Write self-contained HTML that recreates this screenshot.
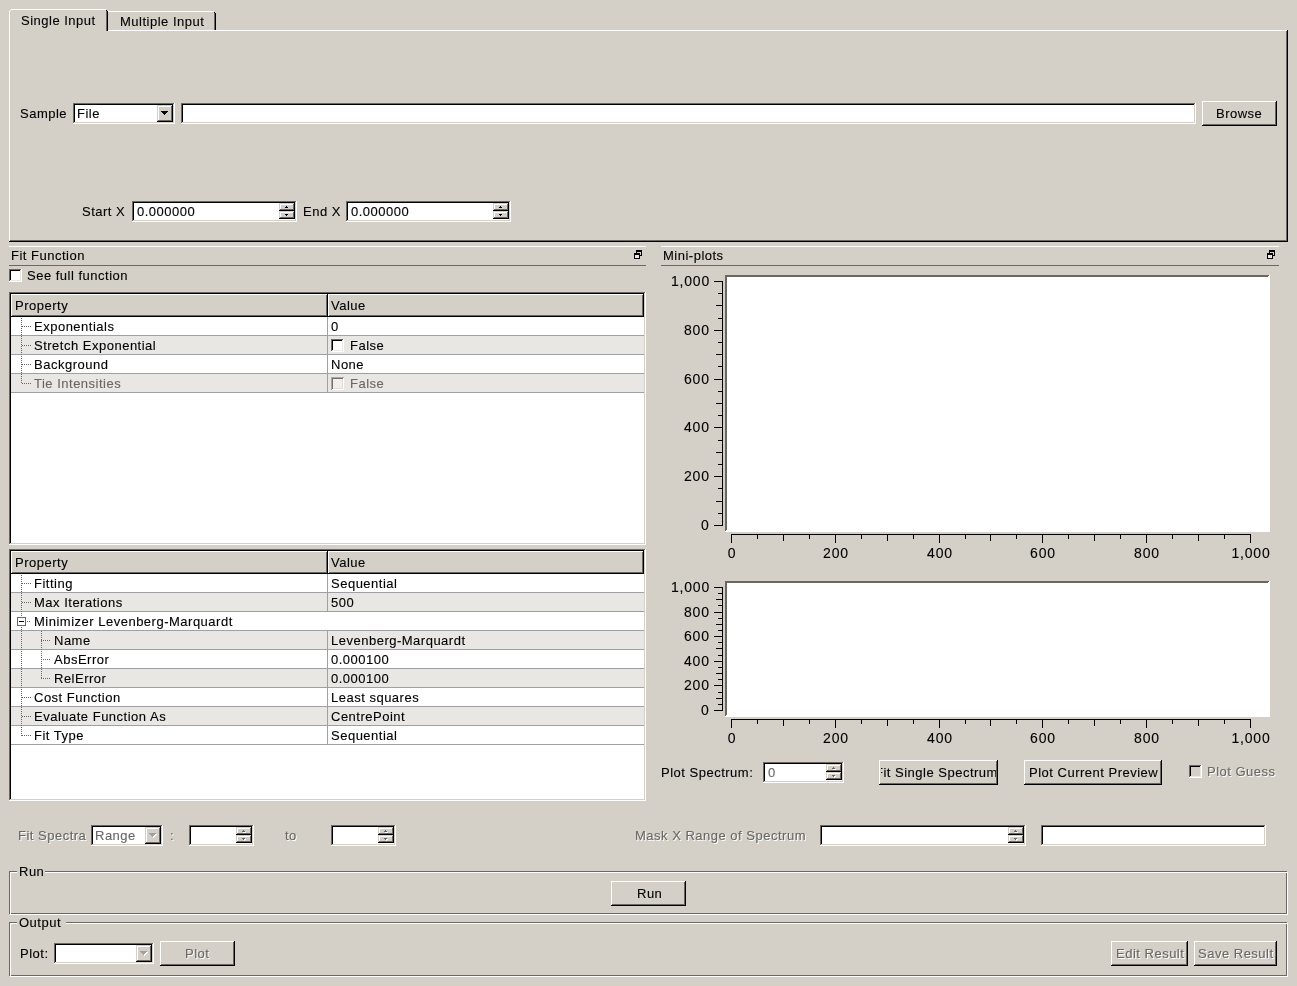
<!DOCTYPE html><html><head><meta charset="utf-8"><style>
html,body{margin:0;padding:0;width:1297px;height:986px;overflow:hidden;background:#d4d0c8;}
.a{position:absolute;}
.t{position:absolute;font-family:"Liberation Sans",sans-serif;font-size:13px;line-height:15px;white-space:nowrap;will-change:transform;-webkit-text-stroke:0.12px currentColor;}
</style></head><body>
<div class="a" style="left:9px;top:30px;width:1279px;height:212px;box-shadow:inset -1px -1px #000,inset 1px 1px #fff,inset -2px -2px #6a6864"></div>
<div class="a" style="left:108px;top:11px;width:108px;height:19px;background:#d4d0c8"></div>
<div class="a" style="left:108px;top:11px;width:106px;height:1px;background:#fff"></div>
<div class="a" style="left:214px;top:12px;width:1px;height:1px;background:#000"></div>
<div class="a" style="left:215px;top:13px;width:1px;height:17px;background:#000"></div>
<div class="a" style="left:214px;top:13px;width:1px;height:17px;background:#6a6864"></div>
<div class="t" style="left:120px;top:14px;color:#000;letter-spacing:0.5px;font-size:13px;">Multiple Input</div>
<div class="a" style="left:9px;top:9px;width:99px;height:22px;background:#d4d0c8"></div>
<div class="a" style="left:11px;top:9px;width:95px;height:1px;background:#fff"></div>
<div class="a" style="left:10px;top:10px;width:1px;height:1px;background:#fff"></div>
<div class="a" style="left:9px;top:11px;width:1px;height:20px;background:#fff"></div>
<div class="a" style="left:106px;top:10px;width:1px;height:1px;background:#000"></div>
<div class="a" style="left:107px;top:11px;width:1px;height:20px;background:#000"></div>
<div class="a" style="left:106px;top:11px;width:1px;height:20px;background:#6a6864"></div>
<div class="t" style="left:21px;top:13px;color:#000;letter-spacing:0.5px;font-size:13px;">Single Input</div>
<div class="t" style="left:20px;top:106px;color:#000;letter-spacing:0.5px;font-size:13px;">Sample</div>
<div class="a" style="left:73px;top:103px;width:102px;height:21px;background:#fff;box-shadow:inset -1px -1px #fff,inset 1px 1px #6a6864,inset -2px -2px #d4d0c8,inset 2px 2px #000"></div>
<div class="a" style="left:157px;top:105px;width:16px;height:17px;background:#d4d0c8;box-shadow:inset -1px -1px #000,inset 1px 1px #d4d0c8,inset -2px -2px #6a6864,inset 2px 2px #fff"></div>
<div class="a" style="left:161px;top:111px;width:7px;height:1px;background:#000"></div>
<div class="a" style="left:162px;top:112px;width:5px;height:1px;background:#000"></div>
<div class="a" style="left:163px;top:113px;width:3px;height:1px;background:#000"></div>
<div class="a" style="left:164px;top:114px;width:1px;height:1px;background:#000"></div>
<div class="t" style="left:77px;top:106px;color:#000;letter-spacing:0.5px;font-size:13px;">File</div>
<div class="a" style="left:181px;top:103px;width:1015px;height:21px;background:#fff;box-shadow:inset -1px -1px #fff,inset 1px 1px #6a6864,inset -2px -2px #d4d0c8,inset 2px 2px #000"></div>
<div class="a" style="left:1202px;top:101px;width:75px;height:25px;background:#d4d0c8;box-shadow:inset -1px -1px #000,inset 1px 1px #fff,inset -2px -2px #6a6864,inset 2px 2px #d4d0c8"></div>
<div class="t" style="left:1216px;top:106px;color:#000;letter-spacing:0.5px;font-size:13px;">Browse</div>
<div class="t" style="left:82px;top:204px;color:#000;letter-spacing:0.5px;font-size:13px;">Start X</div>
<div class="a" style="left:132px;top:201px;width:165px;height:21px;background:#fff;box-shadow:inset -1px -1px #fff,inset 1px 1px #6a6864,inset -2px -2px #d4d0c8,inset 2px 2px #000"></div>
<div class="a" style="left:279px;top:203px;width:16px;height:8px;background:#d4d0c8;box-shadow:inset -1px -1px #000,inset 1px 1px #d4d0c8,inset -2px -2px #6a6864,inset 2px 2px #fff"></div>
<div class="a" style="left:279px;top:211px;width:16px;height:8px;background:#d4d0c8;box-shadow:inset -1px -1px #000,inset 1px 1px #d4d0c8,inset -2px -2px #6a6864,inset 2px 2px #fff"></div>
<div class="a" style="left:286px;top:206px;width:1px;height:1px;background:#000"></div>
<div class="a" style="left:285px;top:207px;width:3px;height:1px;background:#000"></div>
<div class="a" style="left:285px;top:214px;width:3px;height:1px;background:#000"></div>
<div class="a" style="left:286px;top:215px;width:1px;height:1px;background:#000"></div>
<div class="t" style="left:137px;top:204px;color:#000;letter-spacing:0.5px;font-size:13px;">0.000000</div>
<div class="t" style="left:303px;top:204px;color:#000;letter-spacing:0.5px;font-size:13px;">End X</div>
<div class="a" style="left:346px;top:201px;width:165px;height:21px;background:#fff;box-shadow:inset -1px -1px #fff,inset 1px 1px #6a6864,inset -2px -2px #d4d0c8,inset 2px 2px #000"></div>
<div class="a" style="left:493px;top:203px;width:16px;height:8px;background:#d4d0c8;box-shadow:inset -1px -1px #000,inset 1px 1px #d4d0c8,inset -2px -2px #6a6864,inset 2px 2px #fff"></div>
<div class="a" style="left:493px;top:211px;width:16px;height:8px;background:#d4d0c8;box-shadow:inset -1px -1px #000,inset 1px 1px #d4d0c8,inset -2px -2px #6a6864,inset 2px 2px #fff"></div>
<div class="a" style="left:500px;top:206px;width:1px;height:1px;background:#000"></div>
<div class="a" style="left:499px;top:207px;width:3px;height:1px;background:#000"></div>
<div class="a" style="left:499px;top:214px;width:3px;height:1px;background:#000"></div>
<div class="a" style="left:500px;top:215px;width:1px;height:1px;background:#000"></div>
<div class="t" style="left:351px;top:204px;color:#000;letter-spacing:0.5px;font-size:13px;">0.000000</div>
<div class="a" style="left:9px;top:246px;width:637px;height:1px;background:#fff"></div>
<div class="a" style="left:9px;top:265px;width:637px;height:1px;background:#6a6864"></div>
<div class="t" style="left:11px;top:248px;color:#000;letter-spacing:0.5px;font-size:13px;">Fit Function</div>
<svg class="a" style="left:634px;top:250px" width="9" height="9" shape-rendering="crispEdges"><rect x="2.5" y="0.5" width="5" height="5" fill="#d4d0c8" stroke="#000"/><rect x="2" y="0" width="6" height="2" fill="#000"/><rect x="0.5" y="3.5" width="5" height="5" fill="#e9e7e3" stroke="#000"/><rect x="0" y="3" width="6" height="2" fill="#000"/></svg>
<div class="a" style="left:9px;top:269px;width:13px;height:13px;background:#fff;box-shadow:inset -1px -1px #fff,inset 1px 1px #6a6864,inset -2px -2px #e9e7e3,inset 2px 2px #000"></div>
<div class="t" style="left:27px;top:268px;color:#000;letter-spacing:0.5px;font-size:13px;">See full function</div>
<div class="a" style="left:9px;top:292px;width:637px;height:253px;background:#fff;box-shadow:inset -1px -1px #fff,inset 1px 1px #6a6864,inset -2px -2px #d4d0c8,inset 2px 2px #000"></div>
<div class="a" style="left:11px;top:294px;width:317px;height:23px;background:#d4d0c8;box-shadow:inset -1px -1px #000,inset 1px 1px #fff,inset -2px -2px #6a6864,inset 2px 2px #d4d0c8"></div>
<div class="a" style="left:328px;top:294px;width:316px;height:23px;background:#d4d0c8;box-shadow:inset -1px -1px #000,inset 1px 1px #fff,inset -2px -2px #6a6864,inset 2px 2px #d4d0c8"></div>
<div class="t" style="left:15px;top:298px;color:#000;letter-spacing:0.5px;font-size:13px;">Property</div>
<div class="t" style="left:331px;top:298px;color:#000;letter-spacing:0.5px;font-size:13px;">Value</div>
<div class="a" style="left:11px;top:317px;width:633px;height:19px;background:#fff"></div>
<div class="a" style="left:11px;top:335px;width:633px;height:1px;background:#a0a0a4"></div>
<div class="a" style="left:327px;top:317px;width:1px;height:19px;background:#a0a0a4"></div>
<div class="t" style="left:34px;top:319px;color:#000;letter-spacing:0.5px;font-size:13px;">Exponentials</div>
<div class="t" style="left:331px;top:319px;color:#000;letter-spacing:0.5px;font-size:13px;">0</div>
<div class="a" style="left:11px;top:336px;width:633px;height:19px;background:#e9e7e3"></div>
<div class="a" style="left:11px;top:354px;width:633px;height:1px;background:#a0a0a4"></div>
<div class="a" style="left:327px;top:336px;width:1px;height:19px;background:#a0a0a4"></div>
<div class="t" style="left:34px;top:338px;color:#000;letter-spacing:0.5px;font-size:13px;">Stretch Exponential</div>
<div class="a" style="left:331px;top:339px;width:13px;height:13px;background:#fff;box-shadow:inset -1px -1px #fff,inset 1px 1px #6a6864,inset -2px -2px #e9e7e3,inset 2px 2px #000"></div>
<div class="t" style="left:350px;top:338px;color:#000;letter-spacing:0.5px;font-size:13px;">False</div>
<div class="a" style="left:11px;top:355px;width:633px;height:19px;background:#fff"></div>
<div class="a" style="left:11px;top:373px;width:633px;height:1px;background:#a0a0a4"></div>
<div class="a" style="left:327px;top:355px;width:1px;height:19px;background:#a0a0a4"></div>
<div class="t" style="left:34px;top:357px;color:#000;letter-spacing:0.5px;font-size:13px;">Background</div>
<div class="t" style="left:331px;top:357px;color:#000;letter-spacing:0.5px;font-size:13px;">None</div>
<div class="a" style="left:11px;top:374px;width:633px;height:19px;background:#e9e7e3"></div>
<div class="a" style="left:11px;top:392px;width:633px;height:1px;background:#a0a0a4"></div>
<div class="a" style="left:327px;top:374px;width:1px;height:19px;background:#a0a0a4"></div>
<div class="t" style="left:34px;top:376px;color:#6a6864;letter-spacing:0.5px;font-size:13px;">Tie Intensities</div>
<div class="a" style="left:331px;top:377px;width:13px;height:13px;background:#f2efeb;box-shadow:inset 1px 1px #a8a8a8,inset -1px -1px #fff,inset 2px 2px #707070,inset -2px -2px #e0ddd8"></div>
<div class="t" style="left:350px;top:376px;color:#6a6864;letter-spacing:0.5px;font-size:13px;">False</div>
<div class="a" style="left:21px;top:318px;width:1px;height:66px;background:repeating-linear-gradient(to bottom,#6a6864 0 1px,transparent 1px 2px)"></div>
<div class="a" style="left:22px;top:326px;width:9px;height:1px;background:repeating-linear-gradient(to right,#6a6864 0 1px,transparent 1px 2px)"></div>
<div class="a" style="left:22px;top:345px;width:9px;height:1px;background:repeating-linear-gradient(to right,#6a6864 0 1px,transparent 1px 2px)"></div>
<div class="a" style="left:22px;top:364px;width:9px;height:1px;background:repeating-linear-gradient(to right,#6a6864 0 1px,transparent 1px 2px)"></div>
<div class="a" style="left:22px;top:383px;width:9px;height:1px;background:repeating-linear-gradient(to right,#6a6864 0 1px,transparent 1px 2px)"></div>
<div class="a" style="left:9px;top:549px;width:637px;height:252px;background:#fff;box-shadow:inset -1px -1px #fff,inset 1px 1px #6a6864,inset -2px -2px #d4d0c8,inset 2px 2px #000"></div>
<div class="a" style="left:11px;top:551px;width:317px;height:23px;background:#d4d0c8;box-shadow:inset -1px -1px #000,inset 1px 1px #fff,inset -2px -2px #6a6864,inset 2px 2px #d4d0c8"></div>
<div class="a" style="left:328px;top:551px;width:316px;height:23px;background:#d4d0c8;box-shadow:inset -1px -1px #000,inset 1px 1px #fff,inset -2px -2px #6a6864,inset 2px 2px #d4d0c8"></div>
<div class="t" style="left:15px;top:555px;color:#000;letter-spacing:0.5px;font-size:13px;">Property</div>
<div class="t" style="left:331px;top:555px;color:#000;letter-spacing:0.5px;font-size:13px;">Value</div>
<div class="a" style="left:11px;top:574px;width:633px;height:19px;background:#fff"></div>
<div class="a" style="left:11px;top:592px;width:633px;height:1px;background:#a0a0a4"></div>
<div class="a" style="left:327px;top:574px;width:1px;height:19px;background:#a0a0a4"></div>
<div class="t" style="left:34px;top:576px;color:#000;letter-spacing:0.5px;font-size:13px;">Fitting</div>
<div class="t" style="left:331px;top:576px;color:#000;letter-spacing:0.5px;font-size:13px;">Sequential</div>
<div class="a" style="left:11px;top:593px;width:633px;height:19px;background:#e9e7e3"></div>
<div class="a" style="left:11px;top:611px;width:633px;height:1px;background:#a0a0a4"></div>
<div class="a" style="left:327px;top:593px;width:1px;height:19px;background:#a0a0a4"></div>
<div class="t" style="left:34px;top:595px;color:#000;letter-spacing:0.5px;font-size:13px;">Max Iterations</div>
<div class="t" style="left:331px;top:595px;color:#000;letter-spacing:0.5px;font-size:13px;">500</div>
<div class="a" style="left:11px;top:612px;width:633px;height:19px;background:#fff"></div>
<div class="a" style="left:11px;top:630px;width:633px;height:1px;background:#a0a0a4"></div>
<div class="t" style="left:34px;top:614px;color:#000;letter-spacing:0.5px;font-size:13px;">Minimizer Levenberg-Marquardt</div>
<div class="a" style="left:11px;top:631px;width:633px;height:19px;background:#e9e7e3"></div>
<div class="a" style="left:11px;top:649px;width:633px;height:1px;background:#a0a0a4"></div>
<div class="a" style="left:327px;top:631px;width:1px;height:19px;background:#a0a0a4"></div>
<div class="t" style="left:54px;top:633px;color:#000;letter-spacing:0.5px;font-size:13px;">Name</div>
<div class="t" style="left:331px;top:633px;color:#000;letter-spacing:0.5px;font-size:13px;">Levenberg-Marquardt</div>
<div class="a" style="left:11px;top:650px;width:633px;height:19px;background:#fff"></div>
<div class="a" style="left:11px;top:668px;width:633px;height:1px;background:#a0a0a4"></div>
<div class="a" style="left:327px;top:650px;width:1px;height:19px;background:#a0a0a4"></div>
<div class="t" style="left:54px;top:652px;color:#000;letter-spacing:0.5px;font-size:13px;">AbsError</div>
<div class="t" style="left:331px;top:652px;color:#000;letter-spacing:0.5px;font-size:13px;">0.000100</div>
<div class="a" style="left:11px;top:669px;width:633px;height:19px;background:#e9e7e3"></div>
<div class="a" style="left:11px;top:687px;width:633px;height:1px;background:#a0a0a4"></div>
<div class="a" style="left:327px;top:669px;width:1px;height:19px;background:#a0a0a4"></div>
<div class="t" style="left:54px;top:671px;color:#000;letter-spacing:0.5px;font-size:13px;">RelError</div>
<div class="t" style="left:331px;top:671px;color:#000;letter-spacing:0.5px;font-size:13px;">0.000100</div>
<div class="a" style="left:11px;top:688px;width:633px;height:19px;background:#fff"></div>
<div class="a" style="left:11px;top:706px;width:633px;height:1px;background:#a0a0a4"></div>
<div class="a" style="left:327px;top:688px;width:1px;height:19px;background:#a0a0a4"></div>
<div class="t" style="left:34px;top:690px;color:#000;letter-spacing:0.5px;font-size:13px;">Cost Function</div>
<div class="t" style="left:331px;top:690px;color:#000;letter-spacing:0.5px;font-size:13px;">Least squares</div>
<div class="a" style="left:11px;top:707px;width:633px;height:19px;background:#e9e7e3"></div>
<div class="a" style="left:11px;top:725px;width:633px;height:1px;background:#a0a0a4"></div>
<div class="a" style="left:327px;top:707px;width:1px;height:19px;background:#a0a0a4"></div>
<div class="t" style="left:34px;top:709px;color:#000;letter-spacing:0.5px;font-size:13px;">Evaluate Function As</div>
<div class="t" style="left:331px;top:709px;color:#000;letter-spacing:0.5px;font-size:13px;">CentrePoint</div>
<div class="a" style="left:11px;top:726px;width:633px;height:19px;background:#fff"></div>
<div class="a" style="left:11px;top:744px;width:633px;height:1px;background:#a0a0a4"></div>
<div class="a" style="left:327px;top:726px;width:1px;height:19px;background:#a0a0a4"></div>
<div class="t" style="left:34px;top:728px;color:#000;letter-spacing:0.5px;font-size:13px;">Fit Type</div>
<div class="t" style="left:331px;top:728px;color:#000;letter-spacing:0.5px;font-size:13px;">Sequential</div>
<div class="a" style="left:21px;top:575px;width:1px;height:161px;background:repeating-linear-gradient(to bottom,#6a6864 0 1px,transparent 1px 2px)"></div>
<div class="a" style="left:22px;top:583px;width:9px;height:1px;background:repeating-linear-gradient(to right,#6a6864 0 1px,transparent 1px 2px)"></div>
<div class="a" style="left:22px;top:602px;width:9px;height:1px;background:repeating-linear-gradient(to right,#6a6864 0 1px,transparent 1px 2px)"></div>
<div class="a" style="left:17px;top:617px;width:9px;height:9px;background:#fff;border:1px solid #6a6864;box-sizing:border-box"></div>
<div class="a" style="left:19px;top:621px;width:5px;height:1px;background:#000"></div>
<div class="a" style="left:27px;top:621px;width:4px;height:1px;background:repeating-linear-gradient(to right,#6a6864 0 1px,transparent 1px 2px)"></div>
<div class="a" style="left:41px;top:640px;width:10px;height:1px;background:repeating-linear-gradient(to right,#6a6864 0 1px,transparent 1px 2px)"></div>
<div class="a" style="left:41px;top:659px;width:10px;height:1px;background:repeating-linear-gradient(to right,#6a6864 0 1px,transparent 1px 2px)"></div>
<div class="a" style="left:41px;top:678px;width:10px;height:1px;background:repeating-linear-gradient(to right,#6a6864 0 1px,transparent 1px 2px)"></div>
<div class="a" style="left:22px;top:697px;width:9px;height:1px;background:repeating-linear-gradient(to right,#6a6864 0 1px,transparent 1px 2px)"></div>
<div class="a" style="left:22px;top:716px;width:9px;height:1px;background:repeating-linear-gradient(to right,#6a6864 0 1px,transparent 1px 2px)"></div>
<div class="a" style="left:22px;top:735px;width:9px;height:1px;background:repeating-linear-gradient(to right,#6a6864 0 1px,transparent 1px 2px)"></div>
<div class="a" style="left:41px;top:631px;width:1px;height:48px;background:repeating-linear-gradient(to bottom,#6a6864 0 1px,transparent 1px 2px)"></div>
<div class="a" style="left:661px;top:246px;width:618px;height:1px;background:#fff"></div>
<div class="a" style="left:661px;top:265px;width:618px;height:1px;background:#6a6864"></div>
<div class="t" style="left:663px;top:248px;color:#000;letter-spacing:0.5px;font-size:13px;">Mini-plots</div>
<svg class="a" style="left:1267px;top:250px" width="9" height="9" shape-rendering="crispEdges"><rect x="2.5" y="0.5" width="5" height="5" fill="#d4d0c8" stroke="#000"/><rect x="2" y="0" width="6" height="2" fill="#000"/><rect x="0.5" y="3.5" width="5" height="5" fill="#e9e7e3" stroke="#000"/><rect x="0" y="3" width="6" height="2" fill="#000"/></svg>
<div class="a" style="left:725px;top:275px;width:545px;height:257px;background:#fff"></div>
<div class="a" style="left:725px;top:275px;width:544px;height:1px;background:#6a6864"></div>
<div class="a" style="left:726px;top:276px;width:542px;height:1px;background:#6a6864"></div>
<div class="a" style="left:725px;top:275px;width:1px;height:256px;background:#6a6864"></div>
<div class="a" style="left:726px;top:276px;width:1px;height:254px;background:#6a6864"></div>
<div class="a" style="left:722px;top:281px;width:1px;height:245px;background:#000"></div>
<div class="a" style="left:714px;top:281px;width:8px;height:1px;background:#000"></div>
<div class="t" style="right:587px;top:273px;letter-spacing:0.8px;font-size:14px;line-height:16px">1,000</div>
<div class="a" style="left:718px;top:293px;width:4px;height:1px;background:#000"></div>
<div class="a" style="left:716px;top:305px;width:6px;height:1px;background:#000"></div>
<div class="a" style="left:718px;top:318px;width:4px;height:1px;background:#000"></div>
<div class="a" style="left:714px;top:330px;width:8px;height:1px;background:#000"></div>
<div class="t" style="right:587px;top:322px;letter-spacing:0.8px;font-size:14px;line-height:16px">800</div>
<div class="a" style="left:718px;top:342px;width:4px;height:1px;background:#000"></div>
<div class="a" style="left:716px;top:354px;width:6px;height:1px;background:#000"></div>
<div class="a" style="left:718px;top:366px;width:4px;height:1px;background:#000"></div>
<div class="a" style="left:714px;top:379px;width:8px;height:1px;background:#000"></div>
<div class="t" style="right:587px;top:371px;letter-spacing:0.8px;font-size:14px;line-height:16px">600</div>
<div class="a" style="left:718px;top:391px;width:4px;height:1px;background:#000"></div>
<div class="a" style="left:716px;top:403px;width:6px;height:1px;background:#000"></div>
<div class="a" style="left:718px;top:415px;width:4px;height:1px;background:#000"></div>
<div class="a" style="left:714px;top:427px;width:8px;height:1px;background:#000"></div>
<div class="t" style="right:587px;top:419px;letter-spacing:0.8px;font-size:14px;line-height:16px">400</div>
<div class="a" style="left:718px;top:440px;width:4px;height:1px;background:#000"></div>
<div class="a" style="left:716px;top:452px;width:6px;height:1px;background:#000"></div>
<div class="a" style="left:718px;top:464px;width:4px;height:1px;background:#000"></div>
<div class="a" style="left:714px;top:476px;width:8px;height:1px;background:#000"></div>
<div class="t" style="right:587px;top:468px;letter-spacing:0.8px;font-size:14px;line-height:16px">200</div>
<div class="a" style="left:718px;top:488px;width:4px;height:1px;background:#000"></div>
<div class="a" style="left:716px;top:501px;width:6px;height:1px;background:#000"></div>
<div class="a" style="left:718px;top:513px;width:4px;height:1px;background:#000"></div>
<div class="a" style="left:714px;top:525px;width:8px;height:1px;background:#000"></div>
<div class="t" style="right:587px;top:517px;letter-spacing:0.8px;font-size:14px;line-height:16px">0</div>
<div class="a" style="left:731px;top:534px;width:520px;height:1px;background:#000"></div>
<div class="a" style="left:731px;top:535px;width:1px;height:8px;background:#000"></div>
<div class="t" style="left:682px;width:100px;text-align:center;top:545px;letter-spacing:0.8px;font-size:14px;line-height:16px">0</div>
<div class="a" style="left:757px;top:535px;width:1px;height:4px;background:#000"></div>
<div class="a" style="left:783px;top:535px;width:1px;height:6px;background:#000"></div>
<div class="a" style="left:809px;top:535px;width:1px;height:4px;background:#000"></div>
<div class="a" style="left:835px;top:535px;width:1px;height:8px;background:#000"></div>
<div class="t" style="left:786px;width:100px;text-align:center;top:545px;letter-spacing:0.8px;font-size:14px;line-height:16px">200</div>
<div class="a" style="left:861px;top:535px;width:1px;height:4px;background:#000"></div>
<div class="a" style="left:887px;top:535px;width:1px;height:6px;background:#000"></div>
<div class="a" style="left:913px;top:535px;width:1px;height:4px;background:#000"></div>
<div class="a" style="left:939px;top:535px;width:1px;height:8px;background:#000"></div>
<div class="t" style="left:890px;width:100px;text-align:center;top:545px;letter-spacing:0.8px;font-size:14px;line-height:16px">400</div>
<div class="a" style="left:965px;top:535px;width:1px;height:4px;background:#000"></div>
<div class="a" style="left:990px;top:535px;width:1px;height:6px;background:#000"></div>
<div class="a" style="left:1016px;top:535px;width:1px;height:4px;background:#000"></div>
<div class="a" style="left:1042px;top:535px;width:1px;height:8px;background:#000"></div>
<div class="t" style="left:993px;width:100px;text-align:center;top:545px;letter-spacing:0.8px;font-size:14px;line-height:16px">600</div>
<div class="a" style="left:1068px;top:535px;width:1px;height:4px;background:#000"></div>
<div class="a" style="left:1094px;top:535px;width:1px;height:6px;background:#000"></div>
<div class="a" style="left:1120px;top:535px;width:1px;height:4px;background:#000"></div>
<div class="a" style="left:1146px;top:535px;width:1px;height:8px;background:#000"></div>
<div class="t" style="left:1097px;width:100px;text-align:center;top:545px;letter-spacing:0.8px;font-size:14px;line-height:16px">800</div>
<div class="a" style="left:1172px;top:535px;width:1px;height:4px;background:#000"></div>
<div class="a" style="left:1198px;top:535px;width:1px;height:6px;background:#000"></div>
<div class="a" style="left:1224px;top:535px;width:1px;height:4px;background:#000"></div>
<div class="a" style="left:1250px;top:535px;width:1px;height:8px;background:#000"></div>
<div class="t" style="left:1201px;width:100px;text-align:center;top:545px;letter-spacing:0.8px;font-size:14px;line-height:16px">1,000</div>
<div class="a" style="left:725px;top:581px;width:545px;height:136px;background:#fff"></div>
<div class="a" style="left:725px;top:581px;width:544px;height:1px;background:#6a6864"></div>
<div class="a" style="left:726px;top:582px;width:542px;height:1px;background:#6a6864"></div>
<div class="a" style="left:725px;top:581px;width:1px;height:135px;background:#6a6864"></div>
<div class="a" style="left:726px;top:582px;width:1px;height:133px;background:#6a6864"></div>
<div class="a" style="left:722px;top:587px;width:1px;height:124px;background:#000"></div>
<div class="a" style="left:714px;top:587px;width:8px;height:1px;background:#000"></div>
<div class="t" style="right:587px;top:579px;letter-spacing:0.8px;font-size:14px;line-height:16px">1,000</div>
<div class="a" style="left:718px;top:593px;width:4px;height:1px;background:#000"></div>
<div class="a" style="left:716px;top:599px;width:6px;height:1px;background:#000"></div>
<div class="a" style="left:718px;top:605px;width:4px;height:1px;background:#000"></div>
<div class="a" style="left:714px;top:612px;width:8px;height:1px;background:#000"></div>
<div class="t" style="right:587px;top:604px;letter-spacing:0.8px;font-size:14px;line-height:16px">800</div>
<div class="a" style="left:718px;top:618px;width:4px;height:1px;background:#000"></div>
<div class="a" style="left:716px;top:624px;width:6px;height:1px;background:#000"></div>
<div class="a" style="left:718px;top:630px;width:4px;height:1px;background:#000"></div>
<div class="a" style="left:714px;top:636px;width:8px;height:1px;background:#000"></div>
<div class="t" style="right:587px;top:628px;letter-spacing:0.8px;font-size:14px;line-height:16px">600</div>
<div class="a" style="left:718px;top:642px;width:4px;height:1px;background:#000"></div>
<div class="a" style="left:716px;top:648px;width:6px;height:1px;background:#000"></div>
<div class="a" style="left:718px;top:655px;width:4px;height:1px;background:#000"></div>
<div class="a" style="left:714px;top:661px;width:8px;height:1px;background:#000"></div>
<div class="t" style="right:587px;top:653px;letter-spacing:0.8px;font-size:14px;line-height:16px">400</div>
<div class="a" style="left:718px;top:667px;width:4px;height:1px;background:#000"></div>
<div class="a" style="left:716px;top:673px;width:6px;height:1px;background:#000"></div>
<div class="a" style="left:718px;top:679px;width:4px;height:1px;background:#000"></div>
<div class="a" style="left:714px;top:685px;width:8px;height:1px;background:#000"></div>
<div class="t" style="right:587px;top:677px;letter-spacing:0.8px;font-size:14px;line-height:16px">200</div>
<div class="a" style="left:718px;top:692px;width:4px;height:1px;background:#000"></div>
<div class="a" style="left:716px;top:698px;width:6px;height:1px;background:#000"></div>
<div class="a" style="left:718px;top:704px;width:4px;height:1px;background:#000"></div>
<div class="a" style="left:714px;top:710px;width:8px;height:1px;background:#000"></div>
<div class="t" style="right:587px;top:702px;letter-spacing:0.8px;font-size:14px;line-height:16px">0</div>
<div class="a" style="left:731px;top:719px;width:520px;height:1px;background:#000"></div>
<div class="a" style="left:731px;top:720px;width:1px;height:8px;background:#000"></div>
<div class="t" style="left:682px;width:100px;text-align:center;top:730px;letter-spacing:0.8px;font-size:14px;line-height:16px">0</div>
<div class="a" style="left:757px;top:720px;width:1px;height:4px;background:#000"></div>
<div class="a" style="left:783px;top:720px;width:1px;height:6px;background:#000"></div>
<div class="a" style="left:809px;top:720px;width:1px;height:4px;background:#000"></div>
<div class="a" style="left:835px;top:720px;width:1px;height:8px;background:#000"></div>
<div class="t" style="left:786px;width:100px;text-align:center;top:730px;letter-spacing:0.8px;font-size:14px;line-height:16px">200</div>
<div class="a" style="left:861px;top:720px;width:1px;height:4px;background:#000"></div>
<div class="a" style="left:887px;top:720px;width:1px;height:6px;background:#000"></div>
<div class="a" style="left:913px;top:720px;width:1px;height:4px;background:#000"></div>
<div class="a" style="left:939px;top:720px;width:1px;height:8px;background:#000"></div>
<div class="t" style="left:890px;width:100px;text-align:center;top:730px;letter-spacing:0.8px;font-size:14px;line-height:16px">400</div>
<div class="a" style="left:965px;top:720px;width:1px;height:4px;background:#000"></div>
<div class="a" style="left:990px;top:720px;width:1px;height:6px;background:#000"></div>
<div class="a" style="left:1016px;top:720px;width:1px;height:4px;background:#000"></div>
<div class="a" style="left:1042px;top:720px;width:1px;height:8px;background:#000"></div>
<div class="t" style="left:993px;width:100px;text-align:center;top:730px;letter-spacing:0.8px;font-size:14px;line-height:16px">600</div>
<div class="a" style="left:1068px;top:720px;width:1px;height:4px;background:#000"></div>
<div class="a" style="left:1094px;top:720px;width:1px;height:6px;background:#000"></div>
<div class="a" style="left:1120px;top:720px;width:1px;height:4px;background:#000"></div>
<div class="a" style="left:1146px;top:720px;width:1px;height:8px;background:#000"></div>
<div class="t" style="left:1097px;width:100px;text-align:center;top:730px;letter-spacing:0.8px;font-size:14px;line-height:16px">800</div>
<div class="a" style="left:1172px;top:720px;width:1px;height:4px;background:#000"></div>
<div class="a" style="left:1198px;top:720px;width:1px;height:6px;background:#000"></div>
<div class="a" style="left:1224px;top:720px;width:1px;height:4px;background:#000"></div>
<div class="a" style="left:1250px;top:720px;width:1px;height:8px;background:#000"></div>
<div class="t" style="left:1201px;width:100px;text-align:center;top:730px;letter-spacing:0.8px;font-size:14px;line-height:16px">1,000</div>
<div class="t" style="left:661px;top:765px;color:#000;letter-spacing:0.5px;font-size:13px;">Plot Spectrum:</div>
<div class="a" style="left:763px;top:762px;width:81px;height:21px;background:#fff;box-shadow:inset -1px -1px #fff,inset 1px 1px #6a6864,inset -2px -2px #d4d0c8,inset 2px 2px #000"></div>
<div class="a" style="left:826px;top:764px;width:16px;height:8px;background:#d4d0c8;box-shadow:inset -1px -1px #000,inset 1px 1px #d4d0c8,inset -2px -2px #6a6864,inset 2px 2px #fff"></div>
<div class="a" style="left:826px;top:772px;width:16px;height:8px;background:#d4d0c8;box-shadow:inset -1px -1px #000,inset 1px 1px #d4d0c8,inset -2px -2px #6a6864,inset 2px 2px #fff"></div>
<div class="a" style="left:834px;top:768px;width:1px;height:1px;background:#fff"></div>
<div class="a" style="left:833px;top:769px;width:3px;height:1px;background:#fff"></div>
<div class="a" style="left:833px;top:767px;width:1px;height:1px;background:#6a6864"></div>
<div class="a" style="left:832px;top:768px;width:3px;height:1px;background:#6a6864"></div>
<div class="a" style="left:833px;top:776px;width:3px;height:1px;background:#fff"></div>
<div class="a" style="left:834px;top:777px;width:1px;height:1px;background:#fff"></div>
<div class="a" style="left:832px;top:775px;width:3px;height:1px;background:#6a6864"></div>
<div class="a" style="left:833px;top:776px;width:1px;height:1px;background:#6a6864"></div>
<div class="t" style="left:768px;top:765px;color:#6a6864;letter-spacing:0.5px;font-size:13px;">0</div>
<div class="a" style="left:879px;top:760px;width:119px;height:25px;background:#d4d0c8;box-shadow:inset -1px -1px #000,inset 1px 1px #fff,inset -2px -2px #6a6864,inset 2px 2px #d4d0c8"></div>
<div class="a" style="left:881px;top:762px;width:115px;height:21px;overflow:hidden"><div class="t" style="left:-6px;top:3px;letter-spacing:0.5px">Fit Single Spectrum</div></div>
<div class="a" style="left:1024px;top:760px;width:138px;height:25px;background:#d4d0c8;box-shadow:inset -1px -1px #000,inset 1px 1px #fff,inset -2px -2px #6a6864,inset 2px 2px #d4d0c8"></div>
<div class="t" style="left:1029px;top:765px;color:#000;letter-spacing:0.5px;font-size:13px;">Plot Current Preview</div>
<div class="a" style="left:1189px;top:765px;width:13px;height:13px;background:#d4d0c8;box-shadow:inset -1px -1px #fff,inset 1px 1px #6a6864,inset -2px -2px #e9e7e3,inset 2px 2px #000"></div>
<div class="t" style="left:1207px;top:764px;color:#6a6864;letter-spacing:0.5px;font-size:13px;text-shadow:1px 1px 0 #fff;">Plot Guess</div>
<div class="t" style="left:18px;top:828px;color:#6a6864;letter-spacing:0.5px;font-size:13px;text-shadow:1px 1px 0 #fff;">Fit Spectra</div>
<div class="a" style="left:91px;top:825px;width:72px;height:21px;background:#fff;box-shadow:inset -1px -1px #fff,inset 1px 1px #6a6864,inset -2px -2px #d4d0c8,inset 2px 2px #000"></div>
<div class="a" style="left:145px;top:827px;width:16px;height:17px;background:#d4d0c8;box-shadow:inset -1px -1px #000,inset 1px 1px #d4d0c8,inset -2px -2px #6a6864,inset 2px 2px #fff"></div>
<div class="a" style="left:150px;top:834px;width:7px;height:1px;background:#fff"></div>
<div class="a" style="left:151px;top:835px;width:5px;height:1px;background:#fff"></div>
<div class="a" style="left:152px;top:836px;width:3px;height:1px;background:#fff"></div>
<div class="a" style="left:153px;top:837px;width:1px;height:1px;background:#fff"></div>
<div class="a" style="left:149px;top:833px;width:7px;height:1px;background:#a0a0a4"></div>
<div class="a" style="left:150px;top:834px;width:5px;height:1px;background:#a0a0a4"></div>
<div class="a" style="left:151px;top:835px;width:3px;height:1px;background:#a0a0a4"></div>
<div class="a" style="left:152px;top:836px;width:1px;height:1px;background:#a0a0a4"></div>
<div class="t" style="left:95px;top:828px;color:#6a6864;letter-spacing:0.5px;font-size:13px;">Range</div>
<div class="t" style="left:170px;top:828px;color:#6a6864;letter-spacing:0.5px;font-size:13px;text-shadow:1px 1px 0 #fff;">:</div>
<div class="a" style="left:189px;top:825px;width:65px;height:21px;background:#fff;box-shadow:inset -1px -1px #fff,inset 1px 1px #6a6864,inset -2px -2px #d4d0c8,inset 2px 2px #000"></div>
<div class="a" style="left:236px;top:827px;width:16px;height:8px;background:#d4d0c8;box-shadow:inset -1px -1px #000,inset 1px 1px #d4d0c8,inset -2px -2px #6a6864,inset 2px 2px #fff"></div>
<div class="a" style="left:236px;top:835px;width:16px;height:8px;background:#d4d0c8;box-shadow:inset -1px -1px #000,inset 1px 1px #d4d0c8,inset -2px -2px #6a6864,inset 2px 2px #fff"></div>
<div class="a" style="left:244px;top:831px;width:1px;height:1px;background:#fff"></div>
<div class="a" style="left:243px;top:832px;width:3px;height:1px;background:#fff"></div>
<div class="a" style="left:243px;top:830px;width:1px;height:1px;background:#6a6864"></div>
<div class="a" style="left:242px;top:831px;width:3px;height:1px;background:#6a6864"></div>
<div class="a" style="left:243px;top:839px;width:3px;height:1px;background:#fff"></div>
<div class="a" style="left:244px;top:840px;width:1px;height:1px;background:#fff"></div>
<div class="a" style="left:242px;top:838px;width:3px;height:1px;background:#6a6864"></div>
<div class="a" style="left:243px;top:839px;width:1px;height:1px;background:#6a6864"></div>
<div class="t" style="left:285px;top:828px;color:#6a6864;letter-spacing:0.5px;font-size:13px;text-shadow:1px 1px 0 #fff;">to</div>
<div class="a" style="left:331px;top:825px;width:65px;height:21px;background:#fff;box-shadow:inset -1px -1px #fff,inset 1px 1px #6a6864,inset -2px -2px #d4d0c8,inset 2px 2px #000"></div>
<div class="a" style="left:378px;top:827px;width:16px;height:8px;background:#d4d0c8;box-shadow:inset -1px -1px #000,inset 1px 1px #d4d0c8,inset -2px -2px #6a6864,inset 2px 2px #fff"></div>
<div class="a" style="left:378px;top:835px;width:16px;height:8px;background:#d4d0c8;box-shadow:inset -1px -1px #000,inset 1px 1px #d4d0c8,inset -2px -2px #6a6864,inset 2px 2px #fff"></div>
<div class="a" style="left:386px;top:831px;width:1px;height:1px;background:#fff"></div>
<div class="a" style="left:385px;top:832px;width:3px;height:1px;background:#fff"></div>
<div class="a" style="left:385px;top:830px;width:1px;height:1px;background:#6a6864"></div>
<div class="a" style="left:384px;top:831px;width:3px;height:1px;background:#6a6864"></div>
<div class="a" style="left:385px;top:839px;width:3px;height:1px;background:#fff"></div>
<div class="a" style="left:386px;top:840px;width:1px;height:1px;background:#fff"></div>
<div class="a" style="left:384px;top:838px;width:3px;height:1px;background:#6a6864"></div>
<div class="a" style="left:385px;top:839px;width:1px;height:1px;background:#6a6864"></div>
<div class="t" style="left:635px;top:828px;color:#6a6864;letter-spacing:0.5px;font-size:13px;text-shadow:1px 1px 0 #fff;">Mask X Range of Spectrum</div>
<div class="a" style="left:820px;top:825px;width:206px;height:21px;background:#fff;box-shadow:inset -1px -1px #fff,inset 1px 1px #6a6864,inset -2px -2px #d4d0c8,inset 2px 2px #000"></div>
<div class="a" style="left:1008px;top:827px;width:16px;height:8px;background:#d4d0c8;box-shadow:inset -1px -1px #000,inset 1px 1px #d4d0c8,inset -2px -2px #6a6864,inset 2px 2px #fff"></div>
<div class="a" style="left:1008px;top:835px;width:16px;height:8px;background:#d4d0c8;box-shadow:inset -1px -1px #000,inset 1px 1px #d4d0c8,inset -2px -2px #6a6864,inset 2px 2px #fff"></div>
<div class="a" style="left:1016px;top:831px;width:1px;height:1px;background:#fff"></div>
<div class="a" style="left:1015px;top:832px;width:3px;height:1px;background:#fff"></div>
<div class="a" style="left:1015px;top:830px;width:1px;height:1px;background:#6a6864"></div>
<div class="a" style="left:1014px;top:831px;width:3px;height:1px;background:#6a6864"></div>
<div class="a" style="left:1015px;top:839px;width:3px;height:1px;background:#fff"></div>
<div class="a" style="left:1016px;top:840px;width:1px;height:1px;background:#fff"></div>
<div class="a" style="left:1014px;top:838px;width:3px;height:1px;background:#6a6864"></div>
<div class="a" style="left:1015px;top:839px;width:1px;height:1px;background:#6a6864"></div>
<div class="a" style="left:1041px;top:825px;width:225px;height:21px;background:#fff;box-shadow:inset -1px -1px #fff,inset 1px 1px #6a6864,inset -2px -2px #d4d0c8,inset 2px 2px #000"></div>
<div class="a" style="left:9px;top:871px;width:1278px;height:43px;border:1px solid #6a6864;box-sizing:border-box"></div>
<div class="a" style="left:10px;top:872px;width:1278px;height:43px;border:1px solid #fff;box-sizing:border-box;border-width:1px"></div>
<div class="a" style="left:17px;top:869px;width:28px;height:5px;background:#d4d0c8"></div>
<div class="t" style="left:19px;top:864px;color:#000;letter-spacing:0.5px;font-size:13px;">Run</div>
<div class="a" style="left:611px;top:881px;width:75px;height:25px;background:#d4d0c8;box-shadow:inset -1px -1px #000,inset 1px 1px #fff,inset -2px -2px #6a6864,inset 2px 2px #d4d0c8"></div>
<div class="t" style="left:637px;top:886px;color:#000;letter-spacing:0.5px;font-size:13px;">Run</div>
<div class="a" style="left:9px;top:922px;width:1278px;height:54px;border:1px solid #6a6864;box-sizing:border-box"></div>
<div class="a" style="left:10px;top:923px;width:1278px;height:54px;border:1px solid #fff;box-sizing:border-box;border-width:1px"></div>
<div class="a" style="left:17px;top:920px;width:49px;height:5px;background:#d4d0c8"></div>
<div class="t" style="left:19px;top:915px;color:#000;letter-spacing:0.5px;font-size:13px;">Output</div>
<div class="t" style="left:20px;top:946px;color:#000;letter-spacing:0.5px;font-size:13px;">Plot:</div>
<div class="a" style="left:54px;top:943px;width:100px;height:21px;background:#fff;box-shadow:inset -1px -1px #fff,inset 1px 1px #6a6864,inset -2px -2px #d4d0c8,inset 2px 2px #000"></div>
<div class="a" style="left:136px;top:945px;width:16px;height:17px;background:#d4d0c8;box-shadow:inset -1px -1px #000,inset 1px 1px #d4d0c8,inset -2px -2px #6a6864,inset 2px 2px #fff"></div>
<div class="a" style="left:141px;top:952px;width:7px;height:1px;background:#fff"></div>
<div class="a" style="left:142px;top:953px;width:5px;height:1px;background:#fff"></div>
<div class="a" style="left:143px;top:954px;width:3px;height:1px;background:#fff"></div>
<div class="a" style="left:144px;top:955px;width:1px;height:1px;background:#fff"></div>
<div class="a" style="left:140px;top:951px;width:7px;height:1px;background:#a0a0a4"></div>
<div class="a" style="left:141px;top:952px;width:5px;height:1px;background:#a0a0a4"></div>
<div class="a" style="left:142px;top:953px;width:3px;height:1px;background:#a0a0a4"></div>
<div class="a" style="left:143px;top:954px;width:1px;height:1px;background:#a0a0a4"></div>
<div class="a" style="left:160px;top:941px;width:75px;height:25px;background:#d4d0c8;box-shadow:inset -1px -1px #000,inset 1px 1px #fff,inset -2px -2px #6a6864,inset 2px 2px #d4d0c8"></div>
<div class="t" style="left:185px;top:946px;color:#6a6864;letter-spacing:0.5px;font-size:13px;text-shadow:1px 1px 0 #fff;">Plot</div>
<div class="a" style="left:1111px;top:941px;width:77px;height:25px;background:#d4d0c8;box-shadow:inset -1px -1px #000,inset 1px 1px #fff,inset -2px -2px #6a6864,inset 2px 2px #d4d0c8"></div>
<div class="t" style="left:1116px;top:946px;color:#6a6864;letter-spacing:0.5px;font-size:13px;text-shadow:1px 1px 0 #fff;">Edit Result</div>
<div class="a" style="left:1194px;top:941px;width:83px;height:25px;background:#d4d0c8;box-shadow:inset -1px -1px #000,inset 1px 1px #fff,inset -2px -2px #6a6864,inset 2px 2px #d4d0c8"></div>
<div class="t" style="left:1198px;top:946px;color:#6a6864;letter-spacing:0.5px;font-size:13px;text-shadow:1px 1px 0 #fff;">Save Result</div>
</body></html>
